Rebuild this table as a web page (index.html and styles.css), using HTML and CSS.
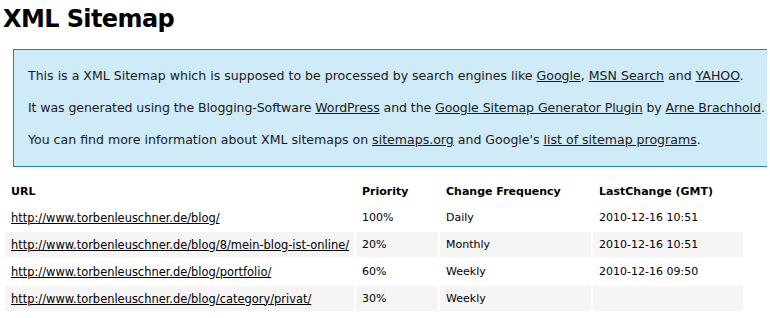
FILE: index.html
```html
<!DOCTYPE html>
<html lang="de">
<head>
<meta charset="utf-8">
<title>XML Sitemap</title>
<link rel="stylesheet" href="styles.css">
</head>
<body>
<h1 class="title">XML Sitemap</h1>
<div class="intro">
  <p>This is a XML Sitemap which is supposed to be processed by search engines like <a href="#">Google</a>, <a href="#">MSN Search</a> and <a href="#">YAHOO</a>.</p>
  <p class="tight">It was generated using the Blogging-Software <a href="#">WordPress</a> and the <a href="#">Google Sitemap Generator Plugin</a> by <a href="#">Arne Brachhold</a>.</p>
  <p>You can find more information about XML sitemaps on <a href="#">sitemaps.org</a> and Google's <a href="#">list of sitemap programs</a>.</p>
</div>
<table class="sitemap">
  <colgroup>
    <col class="c-url"><col class="c-prio"><col class="c-freq"><col class="c-date">
  </colgroup>
  <thead>
    <tr><th>URL</th><th>Priority</th><th>Change Frequency</th><th>LastChange (GMT)</th></tr>
  </thead>
  <tbody>
    <tr><td><a href="#">http://www.torbenleuschner.de/blog/</a></td><td>100%</td><td>Daily</td><td>2010-12-16 10:51</td></tr>
    <tr class="high"><td><a href="#">http://www.torbenleuschner.de/blog/8/mein-blog-ist-online/</a></td><td>20%</td><td>Monthly</td><td>2010-12-16 10:51</td></tr>
    <tr><td><a href="#">http://www.torbenleuschner.de/blog/portfolio/</a></td><td>60%</td><td>Weekly</td><td>2010-12-16 09:50</td></tr>
    <tr class="high"><td><a href="#">http://www.torbenleuschner.de/blog/category/privat/</a></td><td>30%</td><td>Weekly</td><td></td></tr>
  </tbody>
</table>
</body>
</html>
```
FILE: styles.css
```css
html, body {
  background: #fff;
}
body {
  margin: 0 3px;
  font-family: "DejaVu Sans", Verdana, sans-serif;
  font-size: 13px;
  color: #000;
}
.title {
  font-size: 24px;
  letter-spacing: -0.6px;
  font-weight: bold;
  line-height: 30px;
  margin: 4px 0 15px;
}
.intro {
  background: #cfebf7;
  border: 1px solid #2580b2;
  padding: 3px 13px 3px 14px;
  margin: 10px -30px 9px 10px;
  color: #1a1a1a;
  font-size: 12.55px;
}
.intro p {
  margin: 14px 0;
  line-height: 18px;
  white-space: nowrap;
}
.intro p.tight {
  letter-spacing: -0.09px;
}
.intro a {
  color: #1a1a1a;
}
.sitemap {
  border-collapse: separate;
  border-spacing: 2px;
  table-layout: fixed;
  width: 742px;
  font-size: 11px;
}
.c-url { width: 349px; }
.c-prio { width: 82px; }
.c-freq { width: 151px; }
.c-date { width: 150px; }
.sitemap th,
.sitemap td {
  height: 25px;
  padding: 0 0 0 6px;
  text-align: left;
  white-space: nowrap;
  overflow: hidden;
}
.sitemap th {
  font-weight: bold;
  height: 23px;
  padding-top: 2px;
}
.sitemap a {
  color: #000;
  font-size: 11.45px;
}
.sitemap tr.high td {
  background: #f5f5f5;
}
```
